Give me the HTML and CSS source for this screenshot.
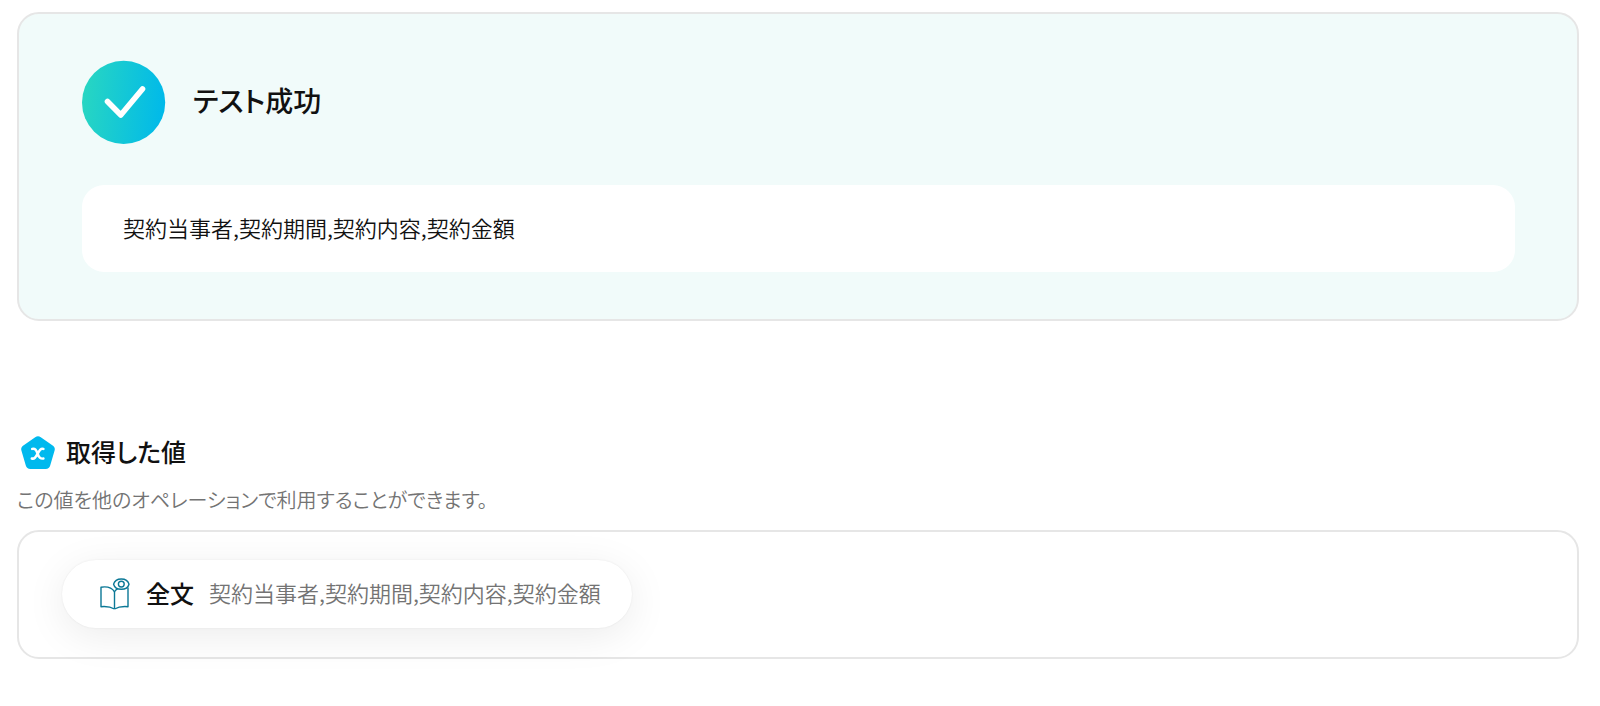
FILE: index.html
```html
<!DOCTYPE html>
<html lang="ja">
<head>
<meta charset="utf-8">
<meta name="viewport" content="width=device-width, initial-scale=1">
<title>テスト成功</title>
<link rel="stylesheet" href="styles.css">
</head>
<body>
<main class="page">
  <section class="result">
    <header class="result-header">
      <svg class="result-icon" viewBox="0 0 84 84" aria-hidden="true">
        <defs>
          <linearGradient id="success" x1="0" y1="0.45" x2="1" y2="0.55">
            <stop offset="0" stop-color="#28d6c2"/>
            <stop offset="1" stop-color="#00b9ea"/>
          </linearGradient>
        </defs>
        <circle cx="41.6" cy="42.4" r="41.6" fill="url(#success)"/>
        <path d="M25.5 41.5 L38.8 55 L60.5 29" fill="none" stroke="#fff" stroke-width="5.6" stroke-linecap="round" stroke-linejoin="round"/>
      </svg>
      <h1 class="result-title">テスト成功</h1>
    </header>
    <p class="result-output">契約当事者,契約期間,契約内容,契約金額</p>
  </section>

  <section class="values">
    <h2 class="values-title">
      <svg class="values-icon" viewBox="0 0 36 36" aria-hidden="true">
        <path d="M15.2 2.2 Q18 0.2 20.8 2.2 L33 10.7 Q35.5 12.6 34.6 15.6 L30.2 30.6 Q29.2 34 25.7 34 H10.3 Q6.8 34 5.8 30.6 L1.4 15.6 Q0.5 12.6 3 10.7 Z" fill="#00b9ee"/>
        <path d="M12.2 13.9 C15.2 13.2 16.2 15 17.6 18.7 C19 22.4 20.2 24.2 23.4 23.5 M23.4 13.9 C20.6 13.2 19.6 15.2 17.6 18.7 C15.6 22.2 14.6 24.2 11.8 23.5" fill="none" stroke="#fff" stroke-width="2.5" stroke-linecap="round"/>
      </svg>
      <span class="values-heading">取得した値</span>
    </h2>
    <p class="values-note">この値を他のオペレーションで利用することができます。</p>
    <div class="values-list">
      <div class="chip">
        <svg class="chip-icon" viewBox="0 0 30 32" aria-hidden="true">
          <g fill="none" stroke="#0b7896" stroke-width="1.4" stroke-linejoin="round">
            <path d="M14.5 31 C10.5 28.7 6.5 28.2 1 28.7 V9.2 C6.5 8.4 12 9.6 14.5 13.8 C15.3 12.2 16.4 11.2 17.8 10.6"/>
            <path d="M14.5 31 C18.5 28.7 22.5 28.2 28 28.7 V9.5"/>
            <path d="M14.5 13.8 V31"/>
            <path d="M13.6 6.2 C15.4 -0.8 27.2 -0.8 29 6.2 C27.2 13 15.4 13 13.6 6.2 Z"/>
            <circle cx="21.3" cy="6.1" r="2.9"/>
          </g>
        </svg>
        <strong class="chip-name">全文</strong>
        <span class="chip-value">契約当事者,契約期間,契約内容,契約金額</span>
      </div>
    </div>
  </section>
</main>
</body>
</html>
```
FILE: styles.css
```css
* {
  box-sizing: border-box;
}

body {
  margin: 0;
  background: #fff;
  color: #111;
  font-family: "Noto Sans CJK JP", "Noto Sans", sans-serif;
  font-feature-settings: "palt";
}

.page {
  padding: 12px 21px 40px 17px;
}

.result,
.values-list {
  border: 2px solid #e6e6e6;
  border-radius: 22px;
}

.result {
  padding: 46px 62px 47px 63px;
  background: #f1fbfa;
}

.result-header {
  display: flex;
  align-items: center;
  gap: 27px;
}

.result-icon {
  width: 84px;
  height: 84px;
}

.result-title {
  margin: 0;
  padding-bottom: 4px;
  font-size: 28px;
  font-weight: 500;
  line-height: 40px;
}

.result-output {
  margin: 41px 0 0;
  padding: 26px 41px 29px;
  border-radius: 22px;
  background: #fff;
  font-size: 22px;
  font-weight: 350;
  line-height: 32px;
}

.values {
  margin-top: 112px;
}

.values-title {
  display: flex;
  align-items: center;
  gap: 10px;
  margin: 0;
  padding-left: 3px;
  font-size: 25px;
  font-weight: 500;
  line-height: 36px;
}

.values-icon {
  width: 36px;
  height: 36px;
}

.values-heading {
  padding-bottom: 4px;
}

.values-note {
  margin: 12px 0 15px;
  color: #737373;
  font-size: 20px;
  font-weight: 350;
  line-height: 30px;
}

.values-list {
  padding: 28px 43px 29px;
}

.chip {
  display: inline-flex;
  align-items: center;
  height: 68px;
  padding: 0 31px 0 38px;
  border-radius: 34px;
  background: #fff;
  box-shadow: 0 8px 40px rgba(0, 0, 0, 0.08), 0 0 2px rgba(0, 0, 0, 0.08);
  vertical-align: top;
}

.chip-icon {
  width: 30px;
  height: 32px;
}

.chip-name,
.chip-value {
  padding-bottom: 4px;
}

.chip-name {
  margin: 0 15px 0 16px;
  font-size: 24px;
  font-weight: 500;
}

.chip-value {
  color: #737373;
  font-size: 22px;
  font-weight: 350;
}
```
